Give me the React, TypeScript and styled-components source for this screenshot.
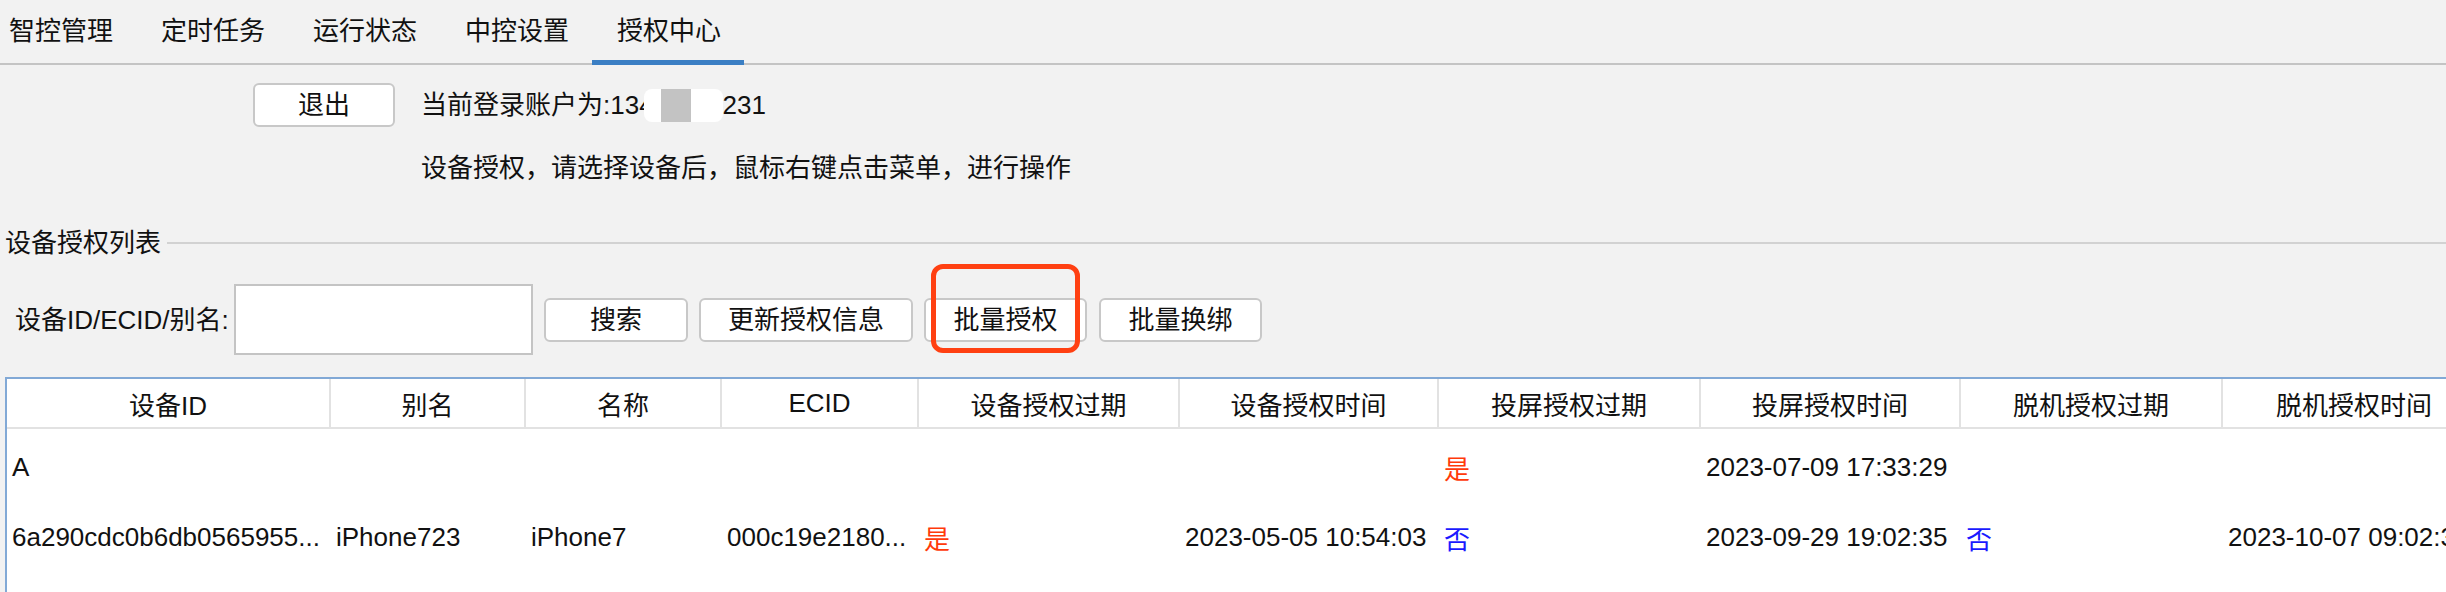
import React from "react";
import styled, { createGlobalStyle, css } from "styled-components";

const GlobalStyle = createGlobalStyle`
  html, body {
    margin: 0;
    padding: 0;
    background: #f2f2f2;
    overflow: hidden;
  }
  body {
    font-family: "Liberation Sans", "Noto Sans CJK SC", sans-serif;
    font-size: 26px;
    color: #111;
  }
  * { box-sizing: border-box; }
`;

const Page = styled.div`
  display: flex;
  flex-direction: column;
  width: 2446px;
  height: 592px;
  overflow: hidden;
`;

const TabBar = styled.nav`
  display: flex;
  gap: 48px;
  padding-left: 9px;
  height: 65px;
  border-bottom: 2px solid #c4c4c4;
  flex-shrink: 0;
`;

const Tab = styled.div<{ $active?: boolean }>`
  position: relative;
  height: 63px;
  line-height: 63px;
  white-space: nowrap;
  ${(p) =>
    p.$active &&
    css`
      &::after {
        content: "";
        position: absolute;
        left: -25px;
        right: -23px;
        bottom: -2px;
        height: 5px;
        background: #3b7fc4;
      }
    `}
`;

const AccountRow = styled.div`
  display: flex;
  align-items: center;
  gap: 26px;
  margin-top: 18px;
  padding-left: 253px;
`;

const Button = styled.button<{ $w: number }>`
  width: ${(p) => p.$w}px;
  height: 44px;
  padding: 0;
  background: #fff;
  border: 2px solid #c8c8c8;
  border-radius: 6px;
  font-family: inherit;
  font-size: 26px;
  color: #111;
  line-height: 40px;
  text-align: center;
  white-space: nowrap;
  flex-shrink: 0;
`;

const AccountText = styled.div`
  display: flex;
  align-items: center;
  line-height: 36px;
  white-space: nowrap;
`;

const Redaction = styled.span`
  display: inline-flex;
  align-items: stretch;
  width: 79px;
  height: 33px;
  margin-left: -10px;
  background: #fff;
  border-radius: 8px;
  padding-left: 17px;
`;

const RedactionBlock = styled.span`
  width: 30px;
  background: #c3c3c3;
`;

const Instruction = styled.div`
  margin-top: 23px;
  padding-left: 421px;
  line-height: 36px;
  white-space: nowrap;
`;

const SectionTitle = styled.div`
  display: flex;
  align-items: center;
  gap: 6px;
  margin-top: 39px;
  padding-left: 5px;
  line-height: 36px;
  white-space: nowrap;
`;

const Rule = styled.div`
  flex: 1;
  height: 2px;
  background: #d2d2d2;
`;

const SearchRow = styled.div`
  display: flex;
  align-items: center;
  gap: 11px;
  margin-top: 23px;
  padding-left: 15px;
`;

const SearchLabel = styled.label`
  width: 208px;
  line-height: 36px;
  white-space: nowrap;
  flex-shrink: 0;
`;

const SearchInput = styled.input`
  width: 299px;
  height: 71px;
  border: 2px solid #c4c4c4;
  background: #fff;
  border-radius: 0;
  outline: none;
  flex-shrink: 0;
`;

const Marked = styled.div`
  position: relative;
  display: flex;
  margin-right: 1px;
`;

const Highlight = styled.span`
  position: absolute;
  left: 7px;
  right: 7px;
  top: -34px;
  bottom: -11px;
  border: 5px solid #ff4012;
  border-radius: 12px;
  pointer-events: none;
`;

const Table = styled.div`
  flex: 1;
  width: max-content;
  margin-top: 22px;
  margin-left: 5px;
  background: #fff;
  border-top: 2px solid #82a9d6;
  border-left: 2px solid #82a9d6;
`;

const columns = [324, 195, 196, 197, 261, 259, 262, 260, 262, 262];
const template = columns.map((w) => `${w}px`).join(" ");

const HeaderRow = styled.div`
  display: grid;
  grid-template-columns: ${template};
  height: 50px;
  border-bottom: 2px solid #e2e2e2;
`;

const HeadCell = styled.div`
  display: flex;
  align-items: center;
  justify-content: center;
  border-right: 2px solid #e2e2e2;
  white-space: nowrap;
  &:last-child {
    border-right: none;
  }
`;

const Body = styled.div`
  padding-top: 3px;
`;

const Row = styled.div`
  display: grid;
  grid-template-columns: ${template};
  height: 70px;
`;

type Tone = "plain" | "yes" | "no";

const Cell = styled.div<{ $tone?: Tone }>`
  display: flex;
  align-items: center;
  padding-left: 5px;
  white-space: nowrap;
  overflow: hidden;
  color: ${(p) =>
    p.$tone === "yes" ? "#ff3a0a" : p.$tone === "no" ? "#1a1aff" : "#111"};
`;

const tabs = ["智控管理", "定时任务", "运行状态", "中控设置", "授权中心"];
const headers = [
  "设备ID",
  "别名",
  "名称",
  "ECID",
  "设备授权过期",
  "设备授权时间",
  "投屏授权过期",
  "投屏授权时间",
  "脱机授权过期",
  "脱机授权时间",
];

const rows: string[][] = [
  ["A", "", "", "", "", "", "是", "2023-07-09 17:33:29", "", ""],
  [
    "6a290cdc0b6db0565955...",
    "iPhone723",
    "iPhone7",
    "000c19e2180...",
    "是",
    "2023-05-05 10:54:03",
    "否",
    "2023-09-29 19:02:35",
    "否",
    "2023-10-07 09:02:35",
  ],
];

const toneOf = (v: string): Tone => (v === "是" ? "yes" : v === "否" ? "no" : "plain");

export default function App() {
  return (
    <>
      <GlobalStyle />
      <Page>
        <TabBar>
          {tabs.map((t) => (
            <Tab key={t} $active={t === "授权中心"}>
              {t}
            </Tab>
          ))}
        </TabBar>

        <AccountRow>
          <Button $w={142}>退出</Button>
          <AccountText>
            当前登录账户为:134
            <Redaction>
              <RedactionBlock />
            </Redaction>
            231
          </AccountText>
        </AccountRow>

        <Instruction>设备授权，请选择设备后，鼠标右键点击菜单，进行操作</Instruction>

        <SectionTitle>
          设备授权列表
          <Rule />
        </SectionTitle>

        <SearchRow>
          <SearchLabel>设备ID/ECID/别名:</SearchLabel>
          <SearchInput />
          <Button $w={144}>搜索</Button>
          <Button $w={214}>更新授权信息</Button>
          <Marked>
            <Button $w={163}>批量授权</Button>
            <Highlight />
          </Marked>
          <Button $w={163}>批量换绑</Button>
        </SearchRow>

        <Table>
          <HeaderRow>
            {headers.map((h) => (
              <HeadCell key={h}>{h}</HeadCell>
            ))}
          </HeaderRow>
          <Body>
            {rows.map((r, i) => (
              <Row key={i}>
                {r.map((v, j) => (
                  <Cell key={j} $tone={toneOf(v)}>
                    {v}
                  </Cell>
                ))}
              </Row>
            ))}
          </Body>
        </Table>
      </Page>
    </>
  );
}
